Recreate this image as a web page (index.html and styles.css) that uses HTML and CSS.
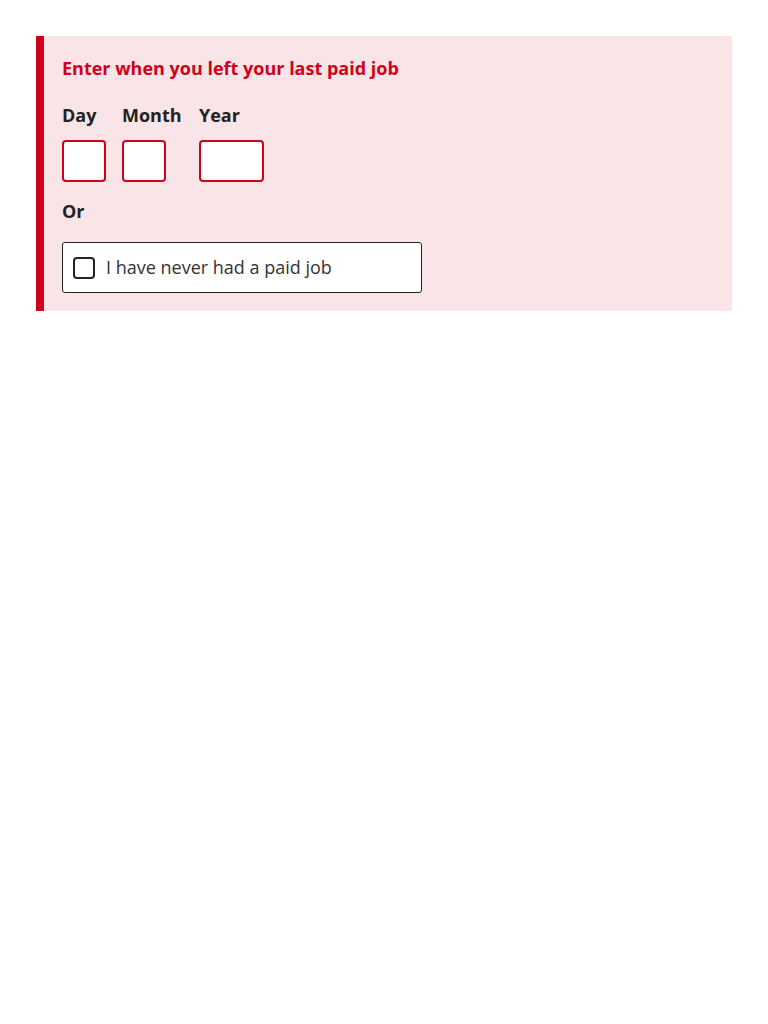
FILE: index.html
```html
<!DOCTYPE html>
<html lang="en">
<head>
<meta charset="utf-8">
<title>Last paid job</title>
<link rel="stylesheet" href="styles.css">
</head>
<body>
<div class="page">
  <fieldset class="error-panel">
    <legend class="error-msg">Enter when you left your last paid job</legend>
    <div class="date-row">
      <div class="date-field">
        <label class="date-label" for="d">Day</label>
        <input class="date-input w-day" id="d" type="text">
      </div>
      <div class="date-field month-field">
        <label class="date-label" for="m">Month</label>
        <input class="date-input w-day" id="m" type="text">
      </div>
      <div class="date-field">
        <label class="date-label" for="y">Year</label>
        <input class="date-input w-year" id="y" type="text">
      </div>
    </div>
    <p class="or">Or</p>
    <label class="check-box">
      <span class="check"></span>
      <span class="check-text">I have never had a paid job</span>
    </label>
  </fieldset>
</div>
</body>
</html>
```
FILE: styles.css
```css
html, body {
  margin: 0;
  padding: 0;
  background: #ffffff;
}
body {
  font-family: "Open Sans", "Noto Sans", sans-serif;
  color: #222222;
}
.page {
  padding: 36px;
}
.error-panel {
  margin: 0;
  border: 0;
  border-left: 8px solid #d0021b;
  background: #f9e4e7;
  padding: 18px 18px 18px 18px;
  display: flex;
  flex-direction: column;
  min-width: 0;
}
.error-msg {
  float: left;
  width: 100%;
  padding: 0;
  margin: 0 0 21px 0;
  font-size: 18px;
  line-height: 28px;
  font-weight: 700;
  color: #d0021b;
}
.date-row {
  clear: both;
  display: flex;
  gap: 16px;
}
.date-field {
  display: flex;
  flex-direction: column;
  gap: 13px;
}
.month-field {
  width: 61px;
}
.date-label {
  font-size: 18px;
  line-height: 24px;
  font-weight: 700;
  color: #222222;
}
.date-input {
  box-sizing: border-box;
  height: 42px;
  border: 2px solid #d0021b;
  border-radius: 4px;
  background: #ffffff;
  margin: 0;
  padding: 0 8px;
  font: inherit;
}
.w-day { width: 44px; }
.w-year { width: 65px; }
.or {
  margin: 17px 0 19px 0;
  font-size: 18px;
  line-height: 24px;
  font-weight: 700;
}
.check-box {
  box-sizing: border-box;
  width: 360px;
  height: 51px;
  display: flex;
  align-items: center;
  gap: 11px;
  padding: 0 10px;
  border: 1px solid #222222;
  border-radius: 3px;
  background: #ffffff;
}
.check {
  box-sizing: border-box;
  width: 22px;
  height: 22px;
  border: 2px solid #222222;
  border-radius: 4px;
  background: #ffffff;
  flex: none;
}
.check-text {
  font-size: 18px;
  line-height: 24px;
  padding-bottom: 2px;
  color: #333333;
}
```
